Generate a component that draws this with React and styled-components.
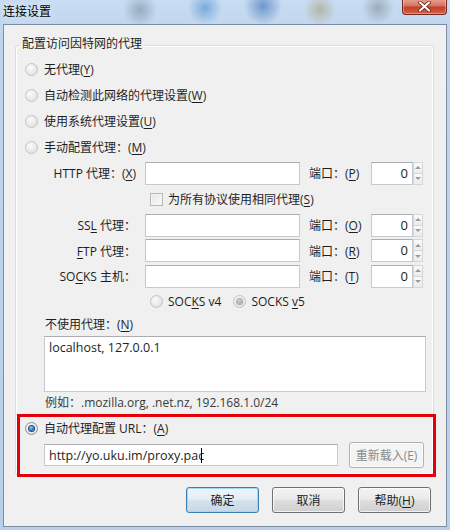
import React from 'react'
import styled, { createGlobalStyle } from 'styled-components'

const GlobalStyle = createGlobalStyle`
  html, body { margin: 0; padding: 0; }
  body {
    font-family: "Open Sans", "Noto Sans CJK SC", sans-serif;
    font-size: 12px;
    color: #1e1e1e;
  }
  u { text-underline-offset: 2px; }
`

const Window = styled.div`
  width: 450px;
  height: 530px;
  box-sizing: border-box;
  display: flex;
  flex-direction: column;
  padding: 0 3px 3px;
  background:
    radial-gradient(circle at 140px 10px, rgba(120, 140, 160, 0.6) 0, rgba(120, 140, 160, 0) 17px),
    radial-gradient(circle at 205px 8px, rgba(70, 140, 205, 0.6) 0, rgba(70, 140, 205, 0) 17px),
    radial-gradient(circle at 263px 6px, rgba(60, 115, 180, 0.65) 0, rgba(60, 115, 180, 0) 19px),
    radial-gradient(circle at 320px 10px, rgba(170, 160, 120, 0.6) 0, rgba(170, 160, 120, 0) 16px),
    radial-gradient(circle at 378px 8px, rgba(130, 140, 150, 0.6) 0, rgba(130, 140, 150, 0) 16px),
    linear-gradient(#c8dcf2, #bed4ec 40px, #b9d0ea);
`

const TitleBar = styled.div`
  height: 24px;
  display: flex;
  justify-content: space-between;
  align-items: flex-start;
`

const Title = styled.div`
  font-family: "Noto Sans CJK SC", sans-serif;
  font-size: 12px;
  line-height: 22px;
  color: #000;
  text-shadow: 0 0 6px rgba(255, 255, 255, 0.9);
`

const CloseButton = styled.div`
  width: 45px;
  height: 16px;
  box-sizing: border-box;
  margin-top: -1px;
  border: 1px solid #6e2a20;
  border-top: none;
  border-radius: 0 0 4px 4px;
  background: linear-gradient(#e9a595, #d6735d 45%, #c4402a 55%, #d6604a);
  box-shadow: inset 0 0 0 1px rgba(255, 255, 255, 0.35);
  display: flex;
  align-items: center;
  justify-content: center;
`

const Client = styled.div`
  flex: 1;
  display: flex;
  flex-direction: column;
  border: 1px solid #7c8ea4;
  background: #f0f0f0;
`

const Group = styled.div`
  margin: 20px 12px 0 11px;
  border: 1px solid #d5dfe5;
  border-radius: 3px;
  box-shadow: inset 0 0 0 1px #fff;
  display: flex;
  flex-direction: column;
`

const GroupTitle = styled.div`
  width: fit-content;
  margin: -10px 0 0 4px;
  padding: 0 2px;
  line-height: 16px;
  background: #f0f0f0;
  color: #1e1e1e;
`

const RadioList = styled.div`
  margin-top: 4px;
  display: flex;
  flex-direction: column;
`

const RadioRow = styled.div`
  height: ${(p) => p.$h || 26}px;
  display: flex;
  align-items: center;
  gap: 6px;
  padding-left: ${(p) => p.$indent || 9}px;
`

const Text = styled.span`
  white-space: nowrap;
`

const Radio = styled.span`
  position: relative;
  width: 13px;
  height: 13px;
  flex: none;
  box-sizing: border-box;
  border-radius: 50%;
  border: 1px solid ${(p) => (p.$dim ? '#c4c4c4' : '#8d8d8d')};
  background: radial-gradient(circle at 40% 35%, #fbfbfb, #e4e4e4 70%, #d8d8d8);
  &::after {
    content: '';
    display: ${(p) => (p.$checked ? 'block' : 'none')};
    position: absolute;
    left: 3px;
    top: 3px;
    width: 5px;
    height: 5px;
    border-radius: 50%;
    background: ${(p) =>
      p.$dim
        ? 'radial-gradient(circle at 40% 35%, #d0d0d0, #9c9c9c)'
        : 'radial-gradient(circle at 40% 35%, #8ed0f6, #1f6fbf 60%, #0e3f7a)'};
    box-shadow: 0 0 0 1px ${(p) => (p.$dim ? '#a9a9a9' : '#1a4a7e')};
  }
`

const ProxyRow = styled.div`
  height: ${(p) => p.$h || 26}px;
  display: flex;
  align-items: center;
`

const FieldLabel = styled.div`
  width: 120px;
  margin-right: 9px;
  text-align: right;
  white-space: nowrap;
`

const TextInput = styled.div`
  width: ${(p) => p.$w || 155}px;
  height: ${(p) => p.$hh || 23}px;
  box-sizing: border-box;
  border: 1px solid #c4cad1;
  border-top-color: #abadb3;
  background: #fff;
  display: flex;
  align-items: center;
  padding: 0 4px;
  white-space: nowrap;
  font-size: 12.5px;
`

const PortLabel = styled.div`
  width: 55px;
  margin: 0 7px 0 9px;
  white-space: nowrap;
`

const Spinner = styled.div`
  display: flex;
  align-items: stretch;
  height: 23px;
`

const SpinValue = styled.div`
  width: 42px;
  box-sizing: border-box;
  border: 1px solid #c4cad1;
  border-top-color: #abadb3;
  background: #fff;
  text-align: right;
  padding-right: 4px;
  line-height: 21px;
  font-size: 13px;
`

const SpinArrows = styled.div`
  width: 10px;
  display: flex;
  flex-direction: column;
`

const SpinArrow = styled.div`
  flex: 1;
  border: 1px solid #d6d6d6;
  border-top-width: ${(p) => (p.$down ? 0 : 1)}px;
  background: linear-gradient(#fafafa, #ececec);
  display: flex;
  align-items: center;
  justify-content: center;
  &::after {
    content: '';
    border-left: 3px solid transparent;
    border-right: 3px solid transparent;
    ${(p) => (p.$down ? 'border-top: 3px solid #9a9a9a;' : 'border-bottom: 3px solid #9a9a9a;')}
  }
`

const CheckRow = styled.div`
  height: 26px;
  display: flex;
  align-items: center;
  gap: 5px;
  padding-left: 134px;
`

const CheckBox = styled.span`
  width: 13px;
  height: 13px;
  box-sizing: border-box;
  border: 1px solid #b8b8b8;
  background: linear-gradient(135deg, #e6e6e6, #fafafa);
  box-shadow: inset 0 0 0 1px #f4f4f4;
`

const RadioOption = styled.div`
  display: flex;
  align-items: center;
  gap: 5px;
`

const VersionRow = styled.div`
  height: 25px;
  display: flex;
  align-items: center;
  gap: 12px;
  padding-left: 134px;
`

const PlainLabel = styled.div`
  height: 22px;
  line-height: 22px;
  padding-left: 29px;
  color: ${(p) => p.$color || '#1e1e1e'};
`

const TextArea = styled.div`
  margin-left: 28px;
  width: 382px;
  height: 56px;
  box-sizing: border-box;
  border: 1px solid #c4cad1;
  border-top-color: #abadb3;
  background: #fff;
  padding: 3px 4px;
  line-height: 16px;
  font-size: 12.5px;
`

const Highlight = styled.div`
  margin: 0 -3px -3px 1px;
  border: 3px solid #e3000b;
  padding: 0 0 6px 0;
  display: flex;
  flex-direction: column;
`

const UrlRow = styled.div`
  height: 26px;
  margin-top: 3px;
  display: flex;
  align-items: center;
  padding-left: 24px;
  gap: 11px;
`

const Caret = styled.span`
  display: inline-block;
  width: 1px;
  height: 15px;
  margin-left: -3px;
  background: #000;
`

const ButtonBar = styled.div`
  margin-top: 12px;
  padding-right: 15px;
  display: flex;
  justify-content: flex-end;
  gap: 13px;
`

const Button = styled.div`
  width: ${(p) => p.$w || 73}px;
  height: ${(p) => p.$h || 26}px;
  box-sizing: border-box;
  border: 1px solid ${(p) => (p.$default ? '#3c7fb1' : p.$disabled ? '#adb2b5' : '#707070')};
  border-radius: 3px;
  background: ${(p) =>
    p.$disabled
      ? '#f4f4f4'
      : p.$default
      ? 'linear-gradient(#eef5fa, #e4eef5 45%, #d3e2ec 55%, #c6d8e6)'
      : 'linear-gradient(#f2f2f2, #ebebeb 45%, #dddddd 55%, #cfcfcf)'};
  box-shadow: inset 0 0 0 1px ${(p) => (p.$default ? '#a6d8f5' : 'rgba(255,255,255,0.7)')};
  color: ${(p) => (p.$disabled ? '#8a8a8a' : '#1e1e1e')};
  display: flex;
  align-items: center;
  justify-content: center;
  flex: none;
  white-space: nowrap;
`

const proxies = [
  { label: <>HTTP 代理：(<u>X</u>)</>, port: 'P', h: 26 },
  { label: <>SS<u>L</u> 代理：</>, port: 'O', h: 26 },
  { label: <><u>F</u>TP 代理：</>, port: 'R', h: 25 },
  { label: <>SO<u>C</u>KS 主机：</>, port: 'T', h: 26 },
]

const ProxyLine = ({ item }) => (
  <ProxyRow $h={item.h}>
    <FieldLabel>{item.label}</FieldLabel>
    <TextInput />
    <PortLabel>端口：(<u>{item.port}</u>)</PortLabel>
    <Spinner>
      <SpinValue>0</SpinValue>
      <SpinArrows>
        <SpinArrow />
        <SpinArrow $down />
      </SpinArrows>
    </Spinner>
  </ProxyRow>
)

const App = () => {
  return (
    <Window>
      <GlobalStyle />
      <TitleBar>
        <Title>连接设置</Title>
        <CloseButton>
          <svg width="13" height="11" viewBox="0 0 13 11">
            <path d="M2 1.5 L11 9.5 M11 1.5 L2 9.5" stroke="#5a1a10" strokeWidth="3.6" strokeLinecap="round" />
            <path d="M2 1.5 L11 9.5 M11 1.5 L2 9.5" stroke="#fff" strokeWidth="2.2" strokeLinecap="round" />
          </svg>
        </CloseButton>
      </TitleBar>
      <Client>
        <Group>
          <GroupTitle>配置访问因特网的代理</GroupTitle>
          <RadioList>
            <RadioRow><Radio $dim /><Text>无代理(<u>Y</u>)</Text></RadioRow>
            <RadioRow><Radio $dim /><Text>自动检测此网络的代理设置(<u>W</u>)</Text></RadioRow>
            <RadioRow><Radio $dim /><Text>使用系统代理设置(<u>U</u>)</Text></RadioRow>
            <RadioRow><Radio $dim /><Text>手动配置代理：(<u>M</u>)</Text></RadioRow>
          </RadioList>
          <ProxyLine item={proxies[0]} />
          <CheckRow>
            <CheckBox />
            <Text>为所有协议使用相同代理(<u>S</u>)</Text>
          </CheckRow>
          {proxies.slice(1).map((p, i) => (
            <ProxyLine key={i} item={p} />
          ))}
          <VersionRow>
            <RadioOption><Radio $dim /><Text>SOC<u>K</u>S v4</Text></RadioOption>
            <RadioOption><Radio $dim $checked /><Text>SOCKS <u>v</u>5</Text></RadioOption>
          </VersionRow>
          <PlainLabel>不使用代理：(<u>N</u>)</PlainLabel>
          <TextArea>localhost, 127.0.0.1</TextArea>
          <PlainLabel $color="#3a3a3a">例如：.mozilla.org, .net.nz, 192.168.1.0/24</PlainLabel>
          <Highlight>
            <RadioRow $h={22} $indent={5}>
              <Radio $checked />
              <Text>自动代理配置 URL：(<u>A</u>)</Text>
            </RadioRow>
            <UrlRow>
              <TextInput $w={294} $hh={22}>
                <Text>http://yo.uku.im/proxy.pac</Text>
                <Caret />
              </TextInput>
              <Button $w={75} $disabled>重新载入(E)</Button>
            </UrlRow>
          </Highlight>
        </Group>
        <ButtonBar>
          <Button $default>确定</Button>
          <Button>取消</Button>
          <Button>帮助(<u>H</u>)</Button>
        </ButtonBar>
      </Client>
    </Window>
  )
}

export default App
